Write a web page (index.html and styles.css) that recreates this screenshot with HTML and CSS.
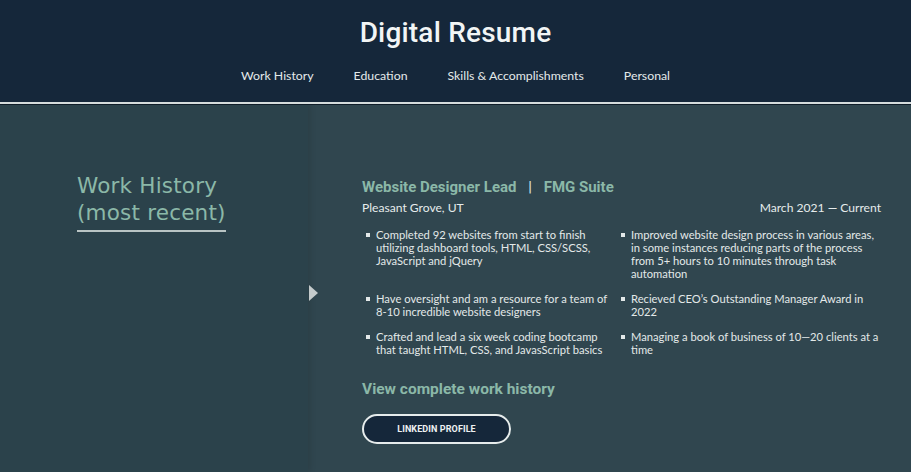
FILE: index.html
```html
<!DOCTYPE html>
<html lang="en">
<head>
<meta charset="utf-8">
<title>Digital Resume</title>
<link rel="stylesheet" href="styles.css">
</head>
<body>
<header class="site-header">
  <h1 class="site-title">Digital Resume</h1>
  <nav class="site-nav">
    <a href="#">Work History</a>
    <a href="#">Education</a>
    <a href="#">Skills &amp; Accomplishments</a>
    <a href="#">Personal</a>
  </nav>
</header>
<main class="layout">
  <aside class="side">
    <h2 class="side-title">Work History<br>(most recent)</h2>
    <span class="side-arrow"></span>
  </aside>
  <section class="content">
    <h3 class="job-title">Website Designer Lead <span class="sep">|</span> FMG Suite</h3>
    <div class="job-meta">
      <span>Pleasant Grove, UT</span>
      <span>March 2021 — Current</span>
    </div>
    <ul class="job-list">
      <li>Completed 92 websites from start to finish utilizing dashboard tools, HTML, CSS/SCSS, JavaScript and jQuery</li>
      <li>Improved website design process in various areas, in some instances reducing parts of the process from 5+ hours to 10 minutes through task automation</li>
      <li>Have oversight and am a resource for a team of 8-10 incredible website designers</li>
      <li>Recieved CEO’s Outstanding Manager Award in 2022</li>
      <li>Crafted and lead a six week coding bootcamp that taught HTML, CSS, and JavasScript basics</li>
      <li>Managing a book of business of 10—20 clients at a time</li>
    </ul>
    <a class="more-link" href="#">View complete work history</a>
    <a class="btn" href="#">LINKEDIN PROFILE</a>
  </section>
</main>
</body>
</html>
```

FILE: styles.css
```css
* { box-sizing: border-box; }
html, body { margin: 0; padding: 0; }
body {
  background: #30464f;
  color: #e6ecec;
  font-family: "Lato", "Liberation Sans", sans-serif;
  overflow: hidden;
  height: 472px;
}
a { color: inherit; text-decoration: none; }

.site-header {
  background: #15273a;
  height: 104px;
  border-bottom: 2px solid #d5dcdc;
  box-shadow: 0 1px 0 #0f1d28;
  display: flex;
  flex-direction: column;
  align-items: center;
  padding-top: 15px;
  position: relative;
  z-index: 2;
}
.site-title {
  margin: 0;
  font-family: "Roboto", "Liberation Sans", sans-serif;
  font-weight: 500;
  font-size: 28px;
  line-height: 36px;
  color: #f2f5f5;
  letter-spacing: 0.2px;
}
.site-nav {
  display: flex;
  gap: 40px;
  margin-top: 17px;
  font-size: 12.3px;
  line-height: 16px;
  color: #e4eaea;
}

.layout {
  display: grid;
  grid-template-columns: 308px 1fr;
  height: 368px;
}
.side {
  background: #2b424b;
  box-shadow: 2px 0 6px rgba(0, 0, 0, 0.12);
  position: relative;
  padding: 68px 0 0 77px;
  z-index: 1;
}
.side-title {
  margin: 0;
  display: inline-block;
  font-family: "DejaVu Sans", sans-serif;
  font-weight: normal;
  font-size: 21.5px;
  line-height: 27px;
  color: #8bb8a8;
  padding-bottom: 4px;
  border-bottom: 2px solid #b9c4c4;
  letter-spacing: 0.2px;
}
.side-arrow {
  position: absolute;
  right: -10px;
  top: 181px;
  width: 0;
  height: 0;
  border-top: 8px solid transparent;
  border-bottom: 8px solid transparent;
  border-left: 9px solid #c4cbcc;
}

.content {
  padding: 74px 30px 0 54px;
  display: flex;
  flex-direction: column;
  align-items: flex-start;
}
.job-title {
  margin: 0;
  font-family: "Roboto", "Liberation Sans", sans-serif;
  font-weight: 700;
  font-size: 15px;
  line-height: 18px;
  color: #8bb8a8;
}
.job-title .sep { margin: 0 8px; font-weight: 400; color: #dfe6e6; }
.job-meta {
  align-self: stretch;
  display: flex;
  justify-content: space-between;
  margin-top: 4px;
  font-size: 12.1px;
  line-height: 16px;
}
.job-list {
  align-self: stretch;
  list-style: none;
  margin: 12px 0 0;
  padding: 0;
  display: grid;
  grid-template-columns: 255px 1fr;
  column-gap: 0;
  row-gap: 12px;
  font-size: 11.2px;
  line-height: 13px;
  color: #e3e9e9;
}
.job-list li {
  position: relative;
  padding-left: 14px;
}
.job-list li::before {
  content: "";
  position: absolute;
  left: 4px;
  top: 5px;
  width: 4px;
  height: 4px;
  background: #e3e9e9;
}
.more-link {
  margin-top: 24px;
  font-family: "Roboto", "Liberation Sans", sans-serif;
  font-weight: 700;
  font-size: 15.5px;
  line-height: 18px;
  color: #8bb8a8;
}
.btn {
  margin-top: 16px;
  width: 149px;
  height: 30px;
  border: 2px solid #e6ecec;
  border-radius: 15px;
  background: #15273a;
  display: flex;
  align-items: center;
  justify-content: center;
  font-family: "Roboto", "Liberation Sans", sans-serif;
  font-weight: 700;
  font-size: 9px;
  letter-spacing: 0.1px;
  color: #eef2f2;
}
```
